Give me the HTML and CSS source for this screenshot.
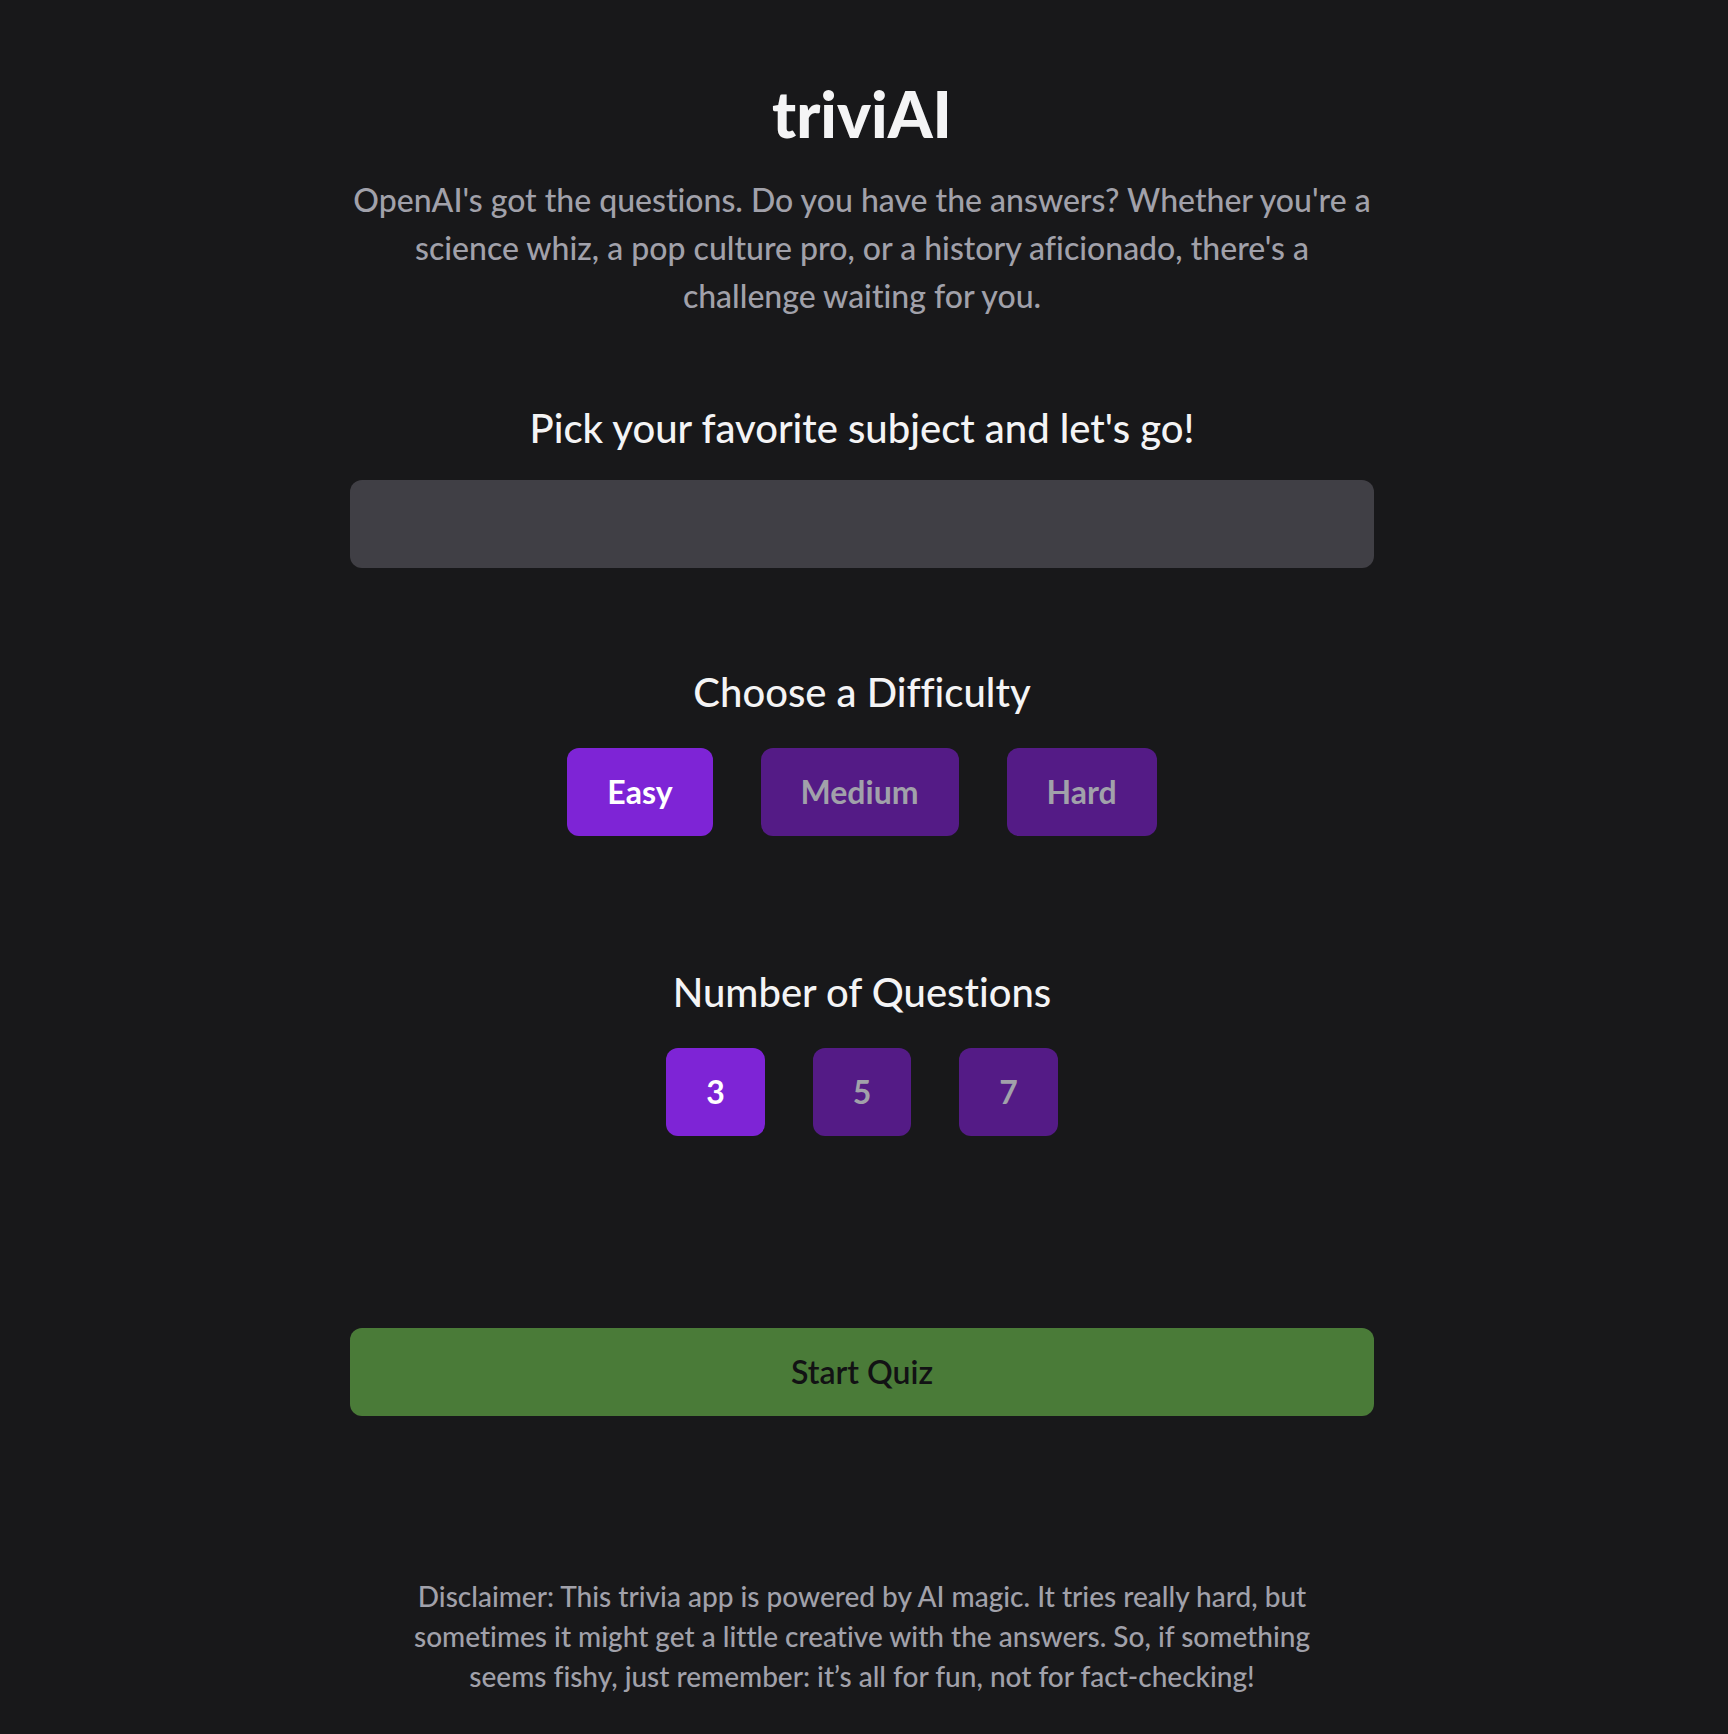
FILE: index.html
```html
<!DOCTYPE html>
<html lang="en">
<head>
  <meta charset="utf-8">
  <meta name="viewport" content="width=device-width, initial-scale=1">
  <title>triviAI</title>
  <link rel="stylesheet" href="styles.css">
</head>
<body>
  <main class="page">
    <header class="intro">
      <h1 class="title">triviAI</h1>
      <p class="tagline">OpenAI's got the questions. Do you have the answers? Whether you're a science whiz, a pop culture pro, or a history aficionado, there's a challenge waiting for you.</p>
    </header>

    <form class="quiz-form">
      <section class="field">
        <label class="heading" for="subject">Pick your favorite subject and let's go!</label>
        <input class="subject" id="subject" name="subject" type="text">
      </section>

      <section class="field choice-field" aria-labelledby="difficulty-heading">
        <h2 class="heading" id="difficulty-heading">Choose a Difficulty</h2>
        <div class="options">
          <button class="option option-selected" type="button" aria-pressed="true">Easy</button>
          <button class="option" type="button" aria-pressed="false">Medium</button>
          <button class="option" type="button" aria-pressed="false">Hard</button>
        </div>
      </section>

      <section class="field choice-field" aria-labelledby="count-heading">
        <h2 class="heading" id="count-heading">Number of Questions</h2>
        <div class="options">
          <button class="option option-selected" type="button" aria-pressed="true">3</button>
          <button class="option" type="button" aria-pressed="false">5</button>
          <button class="option" type="button" aria-pressed="false">7</button>
        </div>
      </section>

      <button class="start" type="submit">Start Quiz</button>
    </form>

    <footer class="disclaimer">Disclaimer: This trivia app is powered by AI magic. It tries really hard, but sometimes it might get a little creative with the answers. So, if something seems fishy, just remember: it’s all for fun, not for fact-checking!</footer>
  </main>
</body>
</html>
```

FILE: styles.css
```css
* {
  box-sizing: border-box;
}

body {
  margin: 0;
  padding-right: 4px;
  background: #18181a;
  color: #f4f4f5;
  font-family: Lato, "Open Sans", sans-serif;
  font-size: 32px;
  font-weight: 500;
  font-variant-ligatures: none;
  line-height: 48px;
}

.page {
  max-width: 1024px;
  margin: 0 auto;
  padding: 80px 0 32px;
  text-align: center;
}

.title {
  margin: 0 0 28px;
  font-size: 64px;
  font-weight: 900;
  line-height: 68px;
}

.tagline {
  margin: 0;
  color: #a1a1aa;
}

.quiz-form {
  display: flex;
  flex-direction: column;
  margin-top: 80px;
}

.field {
  display: flex;
  flex-direction: column;
  gap: 24px;
  margin-bottom: 96px;
}

.choice-field {
  gap: 28px;
  margin-bottom: 128px;
}

.heading {
  margin: 0;
  font-size: 40px;
  font-weight: 500;
  line-height: 56px;
}

.subject {
  width: 100%;
  height: 88px;
  padding: 20px 32px;
  border: 0;
  border-radius: 12px;
  background: #403f45;
  color: inherit;
  font: inherit;
}

.options {
  display: flex;
  justify-content: center;
  gap: 48px;
}

.option,
.start {
  height: 88px;
  padding: 20px 40px;
  border: 0;
  border-radius: 12px;
  font: inherit;
}

.option {
  background: #541b86;
  color: #a1a1aa;
  font-weight: 700;
}

.option-selected {
  background: #7e24d6;
  color: #ffffff;
}

.start {
  margin-top: 64px;
  background: #4a7b38;
  color: #121214;
  font-weight: 600;
}

.disclaimer {
  max-width: 928px;
  margin: 160px auto 0;
  color: #a1a1aa;
  font-size: 28px;
  line-height: 40px;
}
```
